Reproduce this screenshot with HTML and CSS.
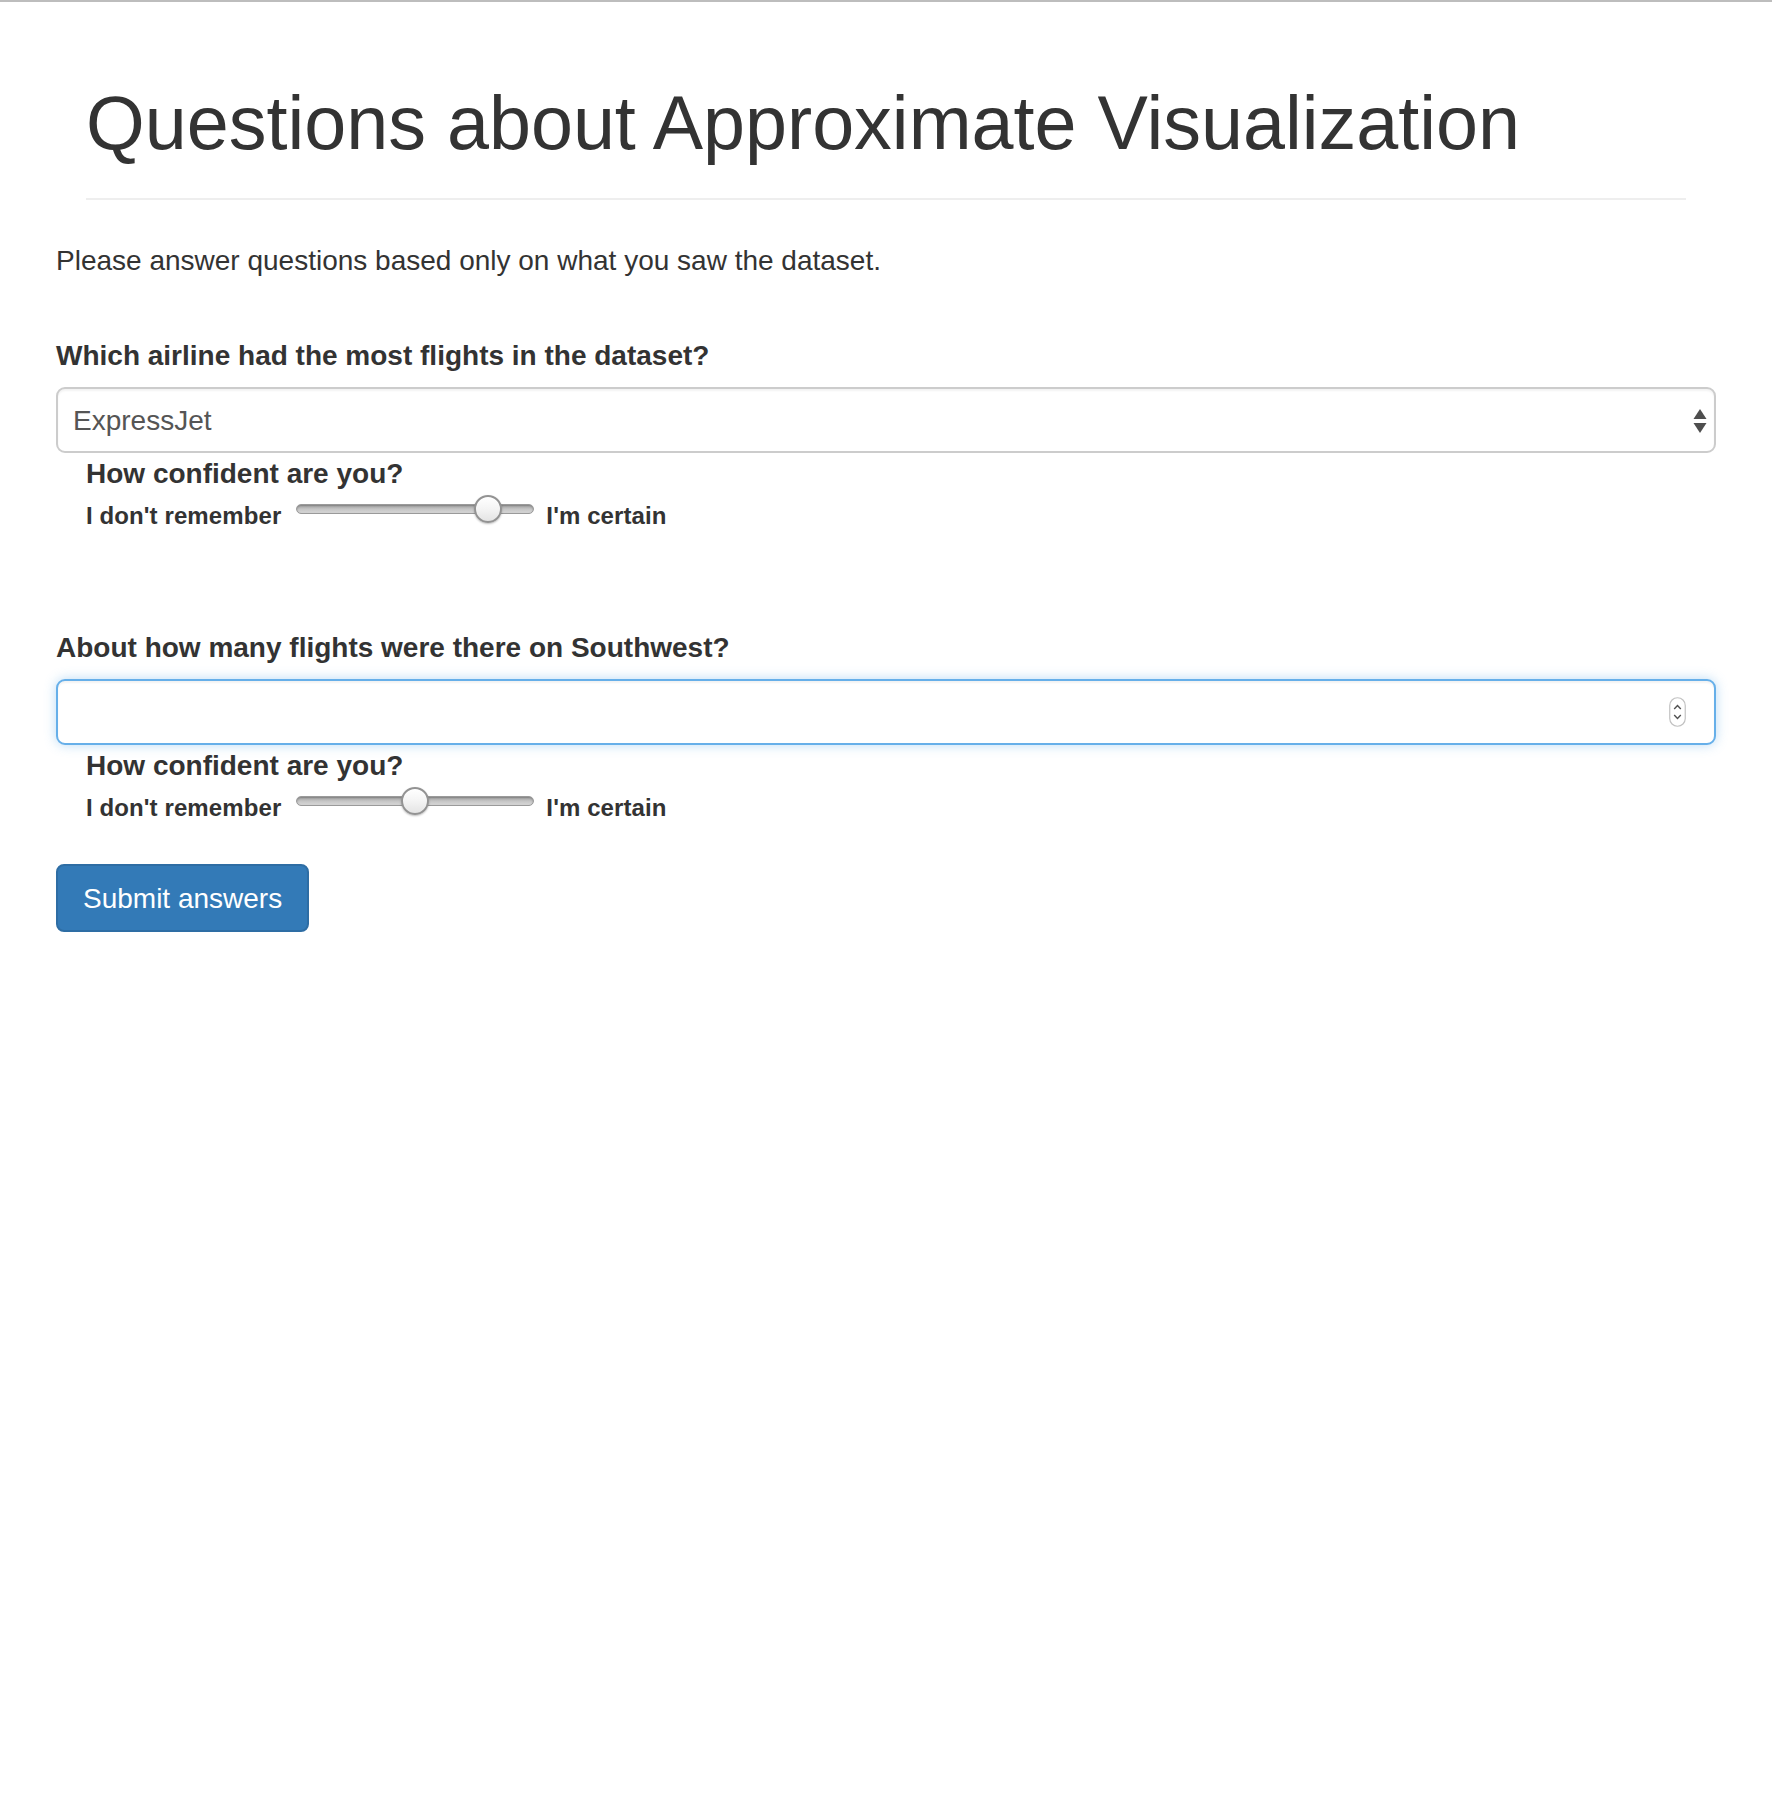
FILE: index.html
```html
<!DOCTYPE html>
<html lang="en">
<head>
<meta charset="utf-8">
<title>Questions about Approximate Visualization</title>
<link rel="stylesheet" href="styles.css">
</head>
<body>
<div class="topline"></div>
<div class="container">
  <div class="page-header">
    <h1>Questions about Approximate Visualization</h1>
  </div>
  <p class="intro">Please answer questions based only on what you saw the dataset.</p>
  <form class="survey">
    <div class="question">
      <label class="q-label">Which airline had the most flights in the dataset?</label>
      <div class="select">
        <span class="select-value">ExpressJet</span>
        <svg class="select-arrows" width="14" height="26" viewBox="0 0 14 26" aria-hidden="true">
          <polygon points="0.5,11 7,1 13.5,11" fill="#4e4e4e"/>
          <polygon points="0.5,15 13.5,15 7,25" fill="#4e4e4e"/>
        </svg>
      </div>
      <div class="confidence">
        <div class="conf-title">How confident are you?</div>
        <div class="conf-row">
          <span>I don't remember</span>
          <input class="slider" type="range" min="0" max="100" value="85">
          <span>I'm certain</span>
        </div>
      </div>
    </div>
    <div class="question question-second">
      <label class="q-label">About how many flights were there on Southwest?</label>
      <div class="number-wrap">
        <input class="number-input" type="number">
        <svg class="spinner" width="17" height="30" viewBox="0 0 17 30" aria-hidden="true">
          <rect x="0.75" y="0.75" width="15.5" height="28.5" rx="7.75" fill="#fff" stroke="#c2c2c2" stroke-width="1.2"/>
          <path d="M5.2 12 L8.5 8.6 L11.8 12" fill="none" stroke="#505050" stroke-width="1.4"/>
          <path d="M5.2 18 L8.5 21.4 L11.8 18" fill="none" stroke="#505050" stroke-width="1.4"/>
        </svg>
      </div>
      <div class="confidence">
        <div class="conf-title">How confident are you?</div>
        <div class="conf-row">
          <span>I don't remember</span>
          <input class="slider" type="range" min="0" max="100" value="50">
          <span>I'm certain</span>
        </div>
      </div>
    </div>
    <button class="btn-submit" type="button">Submit answers</button>
  </form>
</div>
</body>
</html>
```
FILE: styles.css
```css
* {
  box-sizing: border-box;
}

html, body {
  margin: 0;
  padding: 0;
  background: #fff;
}

body {
  font-family: "Liberation Sans", Arial, Helvetica, sans-serif;
  font-size: 28px;
  line-height: 40px;
  color: #333;
}

.topline {
  height: 2px;
  background: #bdbdbd;
}

.container {
  padding: 0 56px;
}

.page-header {
  margin: 80px 30px 0 30px;
  padding-bottom: 34px;
  border-bottom: 2px solid #eee;
}

.page-header h1 {
  margin: 0;
  font-size: 75.5px;
  line-height: 82px;
  font-weight: normal;
  color: #333;
}

.intro {
  margin: 41px 0 0 0;
}

.survey {
  margin: 0;
}

.question {
  margin-top: 54px;
}

.question-second {
  margin-top: 95px;
}

.q-label {
  display: block;
  font-weight: bold;
  padding-top: 1px;
  margin-bottom: -1px;
}

.select {
  margin-top: 12px;
  height: 66px;
  display: flex;
  align-items: center;
  justify-content: space-between;
  padding: 1px 7px 0 15px;
  border: 2px solid #cccccc;
  border-radius: 9px;
  background: #fff;
  box-shadow: inset 0 2px 2px rgba(0, 0, 0, 0.05);
  color: #555;
}

.select-arrows {
  display: block;
}

.number-wrap {
  position: relative;
  margin-top: 12px;
}

.number-input {
  display: block;
  width: 100%;
  height: 66px;
  margin: 0;
  padding: 0 24px;
  font: inherit;
  color: #555;
  background: #fff;
  border: 2px solid #66afe9;
  border-radius: 9px;
  outline: none;
  box-shadow: inset 0 2px 2px rgba(0, 0, 0, 0.05), 0 0 12px rgba(102, 175, 233, 0.45);
  -moz-appearance: textfield;
}

.number-input::-webkit-inner-spin-button,
.number-input::-webkit-outer-spin-button {
  -webkit-appearance: none;
  margin: 0;
}

.spinner {
  position: absolute;
  right: 30px;
  top: 50%;
  transform: translateY(-50%);
  display: block;
}

.confidence {
  padding-left: 30px;
}

.conf-title {
  font-weight: bold;
  padding-top: 1px;
  margin-bottom: -1px;
}

.conf-row {
  margin-top: 5px;
  margin-bottom: -1px;
  padding-top: 1px;
  display: flex;
  align-items: flex-start;
  font-size: 24px;
  line-height: 34px;
  font-weight: bold;
}

.conf-row span {
  letter-spacing: 0.1px;
}

.slider {
  -webkit-appearance: none;
  appearance: none;
  width: 238px;
  height: 28px;
  margin: -4px 12px 0 15px;
  padding: 0;
  background: transparent;
}

.slider:focus {
  outline: none;
}

.slider::-webkit-slider-runnable-track {
  height: 10px;
  border-radius: 5px;
  border: 1px solid #9a9a9a;
  background: linear-gradient(#a6a6a6, #c9c9c9 60%, #d6d6d6);
  box-shadow: inset 0 1px 2px rgba(0, 0, 0, 0.25);
}

.slider::-webkit-slider-thumb {
  -webkit-appearance: none;
  appearance: none;
  width: 28px;
  height: 28px;
  margin-top: -10px;
  border-radius: 50%;
  border: 2px solid #939393;
  background: linear-gradient(#ffffff, #f4f4f4 50%, #e4e4e4);
  box-shadow: 0 1px 2px rgba(0, 0, 0, 0.25);
}

.btn-submit {
  display: block;
  margin-top: 40px;
  padding: 13px 25px 11px 25px;
  font: inherit;
  color: #fff;
  background: #337ab7;
  border: 2px solid #2e6da4;
  border-radius: 8px;
  cursor: pointer;
}
```
